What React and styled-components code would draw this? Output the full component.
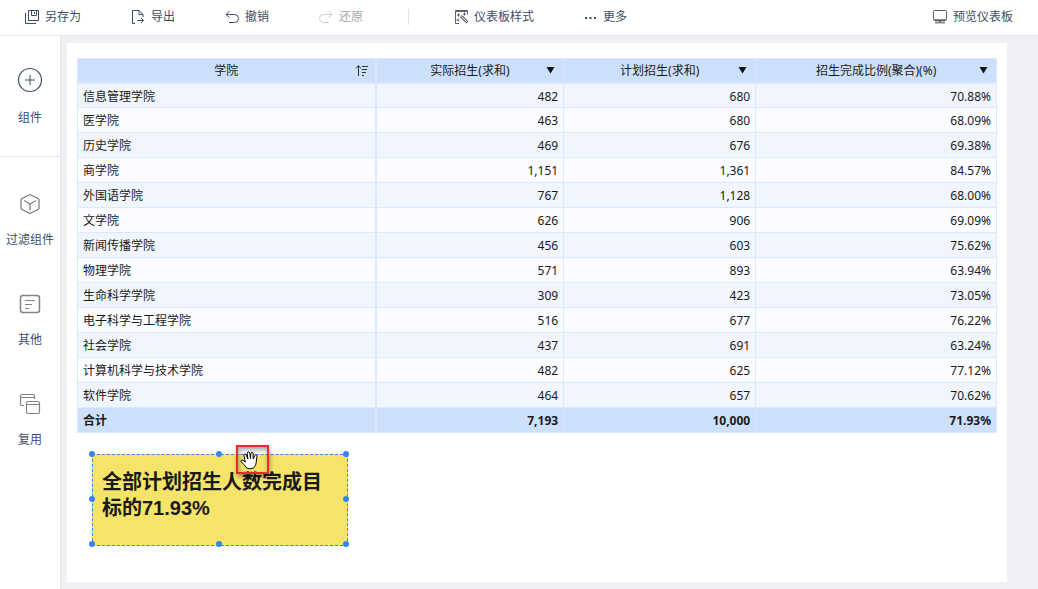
import React from "react";
import styled, { createGlobalStyle } from "styled-components";

const GlobalStyle = createGlobalStyle`
  * {
    box-sizing: border-box;
  }

  body {
    margin: 0;
    font-family: "Noto Sans", "Noto Sans CJK SC", sans-serif;
    font-size: 12px;
    color: #1a1a1a;
  }

  button {
    font: inherit;
    color: inherit;
    background: none;
    border: none;
    padding: 0;
    cursor: pointer;
  }
`;

const Layout = styled.div`
  display: flex;
  flex-direction: column;
  min-height: 100vh;
`;

const Toolbar = styled.header`
  display: flex;
  align-items: center;
  gap: 50px;
  height: 36px;
  padding: 0 25px 1px;
  background-color: #fff;
  border-bottom: 1px solid #e4e5ea;
`;

const ToolButton = styled.button`
  display: flex;
  align-items: center;
  gap: 6px;
  line-height: 18px;
  color: #3d4d66;
  white-space: nowrap;
  margin-left: ${(props) => (props.$end ? "auto" : "0")};

  &:disabled {
    color: #a3a9b3;
    cursor: default;
  }
`;

const Separator = styled.span`
  width: 1px;
  height: 16px;
  margin: 0 -5px;
  background-color: #e0e2e6;
`;

const Body = styled.div`
  display: flex;
  flex: 1;
`;

const Sidebar = styled.nav`
  flex: none;
  width: 61px;
  background-color: #fff;
  border-right: 1px solid #e4e5ea;
`;

const SideGroup = styled.div`
  display: flex;
  flex-direction: column;
  gap: 44px;
  padding: ${(props) => (props.$first ? "31px 0 29px" : "36px 0")};
  border-bottom: ${(props) => (props.$first ? "1px solid #e4e5ea" : "none")};
`;

const SideButton = styled.button`
  display: flex;
  flex-direction: column;
  align-items: center;
  gap: 16px;
  line-height: 18px;
  color: #3d4d66;
  white-space: nowrap;
`;

const Workspace = styled.main`
  display: flex;
  flex: 1;
  padding: 7px 31px 7px 6px;
  background-color: #eff0f4;
`;

const Canvas = styled.section`
  position: relative;
  flex: 1;
  padding: 15px 10px;
  background-color: #fff;
`;

const Table = styled.table`
  width: 100%;
  table-layout: fixed;
  border-collapse: separate;
  border-spacing: 0;
  border-top: 1px solid #dbe9fc;
  border-left: 1px solid #dbe9fc;
  line-height: 18px;
`;

const Col = styled.col`
  width: ${(props) => props.$width};
`;

const HeadCell = styled.th`
  height: 25px;
  padding: 1px 7px 0;
  font-weight: normal;
  background-color: #cce0fc;
  border-right: 1px solid #dbe9fc;
  border-bottom: 2px solid #dbe9fc;

  &:first-child {
    border-right-width: 2px;
    padding: 1px 6px 0;
  }
`;

const HeadContent = styled.div`
  display: grid;
  grid-template-columns: 1fr auto 1fr;
  align-items: center;
`;

const HeadLabel = styled.span`
  grid-column: 2;
`;

const HeadButton = styled.button`
  display: flex;
  justify-self: end;
`;

const Cell = styled.td`
  height: 25px;
  padding: 2px 5px 0;
  text-align: right;
  border-right: 1px solid #dbe9fc;
  border-bottom: 1px solid #dbe9fc;

  &:first-child {
    text-align: left;
    border-right-width: 2px;
  }
`;

const Row = styled.tr`
  background-color: #fbfcff;

  &:nth-child(odd) {
    background-color: #f1f6fe;
  }

  &:first-child ${Cell} {
    height: 24px;
  }
`;

const TotalRow = styled.tr`
  font-weight: bold;
  background-color: #cce0fc;
`;

const Note = styled.div`
  position: absolute;
  left: 25px;
  top: 411px;
  width: 256px;
  height: 92px;
  padding: 14px 9px;
  background-color: #f5e36a;
  border: 1px dashed #3585ec;
`;

const NoteText = styled.p`
  margin: 0;
  font-family: "Liberation Sans", "Noto Sans CJK SC", sans-serif;
  font-size: 20px;
  font-weight: bold;
  line-height: 26px;
`;

const Handle = styled.span`
  position: absolute;
  left: ${(props) => props.$x};
  top: ${(props) => props.$y};
  width: 6px;
  height: 6px;
  margin: -4px;
  border-radius: 50%;
  background-color: #3585ec;
`;

const GrabMark = styled.div`
  position: absolute;
  left: 169px;
  top: 402px;
  display: flex;
  width: 33px;
  height: 29px;
  padding: 4px 2px;
  border: 2px solid #f7262d;
  box-shadow: 1px 3px 4px rgba(0, 0, 0, 0.35),
    inset 1px 3px 5px rgba(0, 0, 0, 0.35);
`;

const Icon = ({ size = 16, color = "currentColor", children }) => (
  <svg
    width={size}
    height={size}
    viewBox={`0 0 ${size} ${size}`}
    fill="none"
    stroke={color}
    aria-hidden="true"
  >
    {children}
  </svg>
);

const SaveIcon = () => (
  <Icon size={14}>
    <path d="M3.5 .5h10v10h-10zM6.5 .5v5h5v-5M9.5 2v2M.5 3v10.5H11" />
  </Icon>
);

const ExportIcon = () => (
  <Icon size={14}>
    <path d="M4 13.5H1.500V.5h6.500l4 4V7M8 .5v4h4M6.500 10.500h6M10 8l2.500 2.500L10 13" />
  </Icon>
);

const UndoIcon = () => (
  <Icon size={14}>
    <path d="M4.500 1L1 4.500l3.500 3M1 4.500h8.500a4 4 0 0 1 0 8H4" />
  </Icon>
);

const RedoIcon = () => (
  <Icon size={14} color="#c9cdd3">
    <path d="M9.500 1L13 4.500l-3.500 3M13 4.500H4.500a4 4 0 0 0 0 8H10" />
  </Icon>
);

const StyleIcon = () => (
  <Icon size={14} color="#5b5f6c">
    <path d="M5 13.500H1.500V.5h12v4M1 1.500h13" />
    <path d="M7 6l6.500 6.500" strokeWidth="3" />
    <path d="M7.500 6.500l5.500 5.500" stroke="#fff" />
    <path d="M3 5h3M4.500 3.500v3M2.500 10h3M4 8.500v3M9 4h3M10.500 2.500v3" />
  </Icon>
);

const MoreIcon = () => (
  <Icon size={13}>
    <path d="M1 7h2M5.500 7h2M10 7h2" strokeWidth="2" />
  </Icon>
);

const ScreenIcon = () => (
  <Icon size={14} color="#62586f">
    <rect x=".5" y=".5" width="13" height="10" rx="1" />
    <path d="M1 9.500h12" stroke="#888" />
    <path d="M7 11v2" strokeWidth="2" />
    <path d="M2 12.500h10" stroke="#888" strokeWidth="2" />
  </Icon>
);

const AddIcon = () => (
  <Icon size={26}>
    <circle cx="13" cy="13" r="11.500" strokeWidth="1.200" />
    <path d="M8 13h10M13 8v10" />
  </Icon>
);

const CubeIcon = () => (
  <Icon size={22} color="#555b68">
    <path
      strokeLinejoin="round"
      d="M11 1.500l9 4.500v10L11 20.500 2 16V6zM5 7.500L11 11l6-3.500M11 11v6.500"
    />
  </Icon>
);

const OtherIcon = () => (
  <Icon size={22} color="#86807f">
    <rect x="1.500" y="2.500" width="19" height="17" rx="2.500" strokeWidth="1.500" />
    <path d="M6 7.500h10M6 11.500h7M6 15.500h4" />
  </Icon>
);

const ReuseIcon = () => (
  <Icon size={22} color="#86807f">
    <path
      strokeWidth="1.200"
      d="M5 12.500H3A1.500 1.500 0 0 1 1.500 11V3A1.500 1.500 0 0 1 3 1.500h11A1.500 1.500 0 0 1 15.500 3v3M2 4.500h13"
    />
    <rect x="7.500" y="8.500" width="13" height="12" rx="1.500" strokeWidth="1.200" />
    <path d="M8 11.500h12" />
  </Icon>
);

const SortIcon = () => (
  <Icon size={14} color="#333">
    <path d="M3.500 12V2M1 4.500l2.500-3 2.500 3M7 2.500h6M7 5.500h5M7 8.500h4M7 11.500h2" />
  </Icon>
);

const CaretIcon = () => (
  <svg width="11" height="8" viewBox="0 0 11 8" aria-hidden="true">
    <path d="M1.500 0h8L5.500 6.500z" fill="#111" />
  </svg>
);

const HandIcon = () => (
  <svg width="19" height="19" viewBox="0 0 19 19" aria-hidden="true">
    <path
      d="M6.500 17L4.500 14 1.200 11C.2 9.700 1.600 8.600 3 9.300L5.300 11 4 4.800C3.600 3 5.500 2.400 6.200 4L7.800 8 7.300 2.300C7.300.6 9.400.4 9.800 2L10.500 7.500 10.900 2.300C11.100.8 13.100.9 13.100 2.600L13.200 8 14.600 4.800C15.300 3.400 17.200 4 16.900 5.600L16.200 11.500C15.800 14 14.800 15.400 13.500 17Q10 18.600 6.500 17z"
      fill="#fff"
      stroke="#000"
      strokeLinejoin="round"
    />
  </svg>
);

const columns = [
  { name: "学院", width: "32.5%", sorted: true },
  { name: "实际招生(求和)", width: "20.4%" },
  { name: "计划招生(求和)", width: "20.9%" },
  { name: "招生完成比例(聚合)(%)", width: "26.2%" },
];

const rows = [
  ["信息管理学院", "482", "680", "70.88%"],
  ["医学院", "463", "680", "68.09%"],
  ["历史学院", "469", "676", "69.38%"],
  ["商学院", "1,151", "1,361", "84.57%"],
  ["外国语学院", "767", "1,128", "68.00%"],
  ["文学院", "626", "906", "69.09%"],
  ["新闻传播学院", "456", "603", "75.62%"],
  ["物理学院", "571", "893", "63.94%"],
  ["生命科学学院", "309", "423", "73.05%"],
  ["电子科学与工程学院", "516", "677", "76.22%"],
  ["社会学院", "437", "691", "63.24%"],
  ["计算机科学与技术学院", "482", "625", "77.12%"],
  ["软件学院", "464", "657", "70.62%"],
];

const total = ["合计", "7,193", "10,000", "71.93%"];

const handles = [
  ["0%", "0%"],
  ["50%", "0%"],
  ["100%", "0%"],
  ["0%", "50%"],
  ["100%", "50%"],
  ["0%", "100%"],
  ["50%", "100%"],
  ["100%", "100%"],
];

const Grid = () => (
  <Table>
    <colgroup>
      {columns.map((col) => (
        <Col key={col.name} $width={col.width} />
      ))}
    </colgroup>
    <thead>
      <tr>
        {columns.map((col) => (
          <HeadCell key={col.name} scope="col">
            <HeadContent>
              <HeadLabel>{col.name}</HeadLabel>
              <HeadButton type="button" aria-label={`${col.name} 排序`}>
                {col.sorted ? <SortIcon /> : <CaretIcon />}
              </HeadButton>
            </HeadContent>
          </HeadCell>
        ))}
      </tr>
    </thead>
    <tbody>
      {rows.map((row) => (
        <Row key={row[0]}>
          {row.map((value, i) => (
            <Cell key={i}>{value}</Cell>
          ))}
        </Row>
      ))}
    </tbody>
    <tfoot>
      <TotalRow>
        {total.map((value, i) => (
          <Cell key={i}>{value}</Cell>
        ))}
      </TotalRow>
    </tfoot>
  </Table>
);

const App = () => {
  return (
    <Layout>
      <GlobalStyle />
      <Toolbar>
        <ToolButton type="button"><SaveIcon />另存为</ToolButton>
        <ToolButton type="button"><ExportIcon />导出</ToolButton>
        <ToolButton type="button"><UndoIcon />撤销</ToolButton>
        <ToolButton type="button" disabled><RedoIcon />还原</ToolButton>
        <Separator />
        <ToolButton type="button"><StyleIcon />仪表板样式</ToolButton>
        <ToolButton type="button"><MoreIcon />更多</ToolButton>
        <ToolButton type="button" $end><ScreenIcon />预览仪表板</ToolButton>
      </Toolbar>
      <Body>
        <Sidebar>
          <SideGroup $first>
            <SideButton type="button"><AddIcon />组件</SideButton>
          </SideGroup>
          <SideGroup>
            <SideButton type="button"><CubeIcon />过滤组件</SideButton>
            <SideButton type="button"><OtherIcon />其他</SideButton>
            <SideButton type="button"><ReuseIcon />复用</SideButton>
          </SideGroup>
        </Sidebar>
        <Workspace>
          <Canvas>
            <Grid />
            <Note>
              <NoteText>全部计划招生人数完成目标的71.93%</NoteText>
              {handles.map(([x, y]) => (
                <Handle key={x + y} $x={x} $y={y} />
              ))}
            </Note>
            <GrabMark>
              <HandIcon />
            </GrabMark>
          </Canvas>
        </Workspace>
      </Body>
    </Layout>
  );
};

export default App;
